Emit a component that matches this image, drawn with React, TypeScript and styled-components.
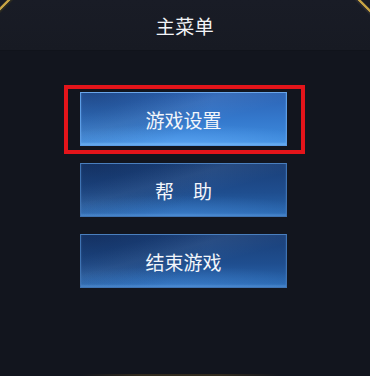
import React from "react";
import styled, { createGlobalStyle } from "styled-components";

const Global = createGlobalStyle`
  html, body { margin: 0; padding: 0; background: #12151e; }
  body { font-family: "Noto Sans CJK SC", "Noto Sans", sans-serif; }
`;

const Screen = styled.div`
  position: relative;
  width: 370px;
  height: 376px;
  overflow: hidden;
  background: #12151e;
  display: flex;
  flex-direction: column;
`;

const Header = styled.div`
  height: 50px;
  display: flex;
  align-items: center;
  justify-content: center;
  background: linear-gradient(180deg, #191c26 0%, #171a23 100%);
  border-bottom: 1px solid #10131b;
  color: #f2f4f8;
  font-size: 19px;
  letter-spacing: 0.5px;
`;

const Menu = styled.div`
  display: flex;
  flex-direction: column;
  gap: 17px;
  padding: 41px 0 0 80px;
`;

const Slot = styled.div`
  position: relative;
  width: 207px;
`;

const Highlight = styled.div`
  position: absolute;
  top: -7px;
  bottom: -8px;
  left: -16px;
  right: -18px;
  border: 4px solid #e4141a;
  pointer-events: none;
`;

const MenuButton = styled.button<{ $active?: boolean }>`
  width: 207px;
  height: 54px;
  box-sizing: border-box;
  border: 1px solid ${(p) => (p.$active ? "#5c9de6" : "#3f73b3")};
  border-top-color: ${(p) => (p.$active ? "#6aa6ea" : "#4a7fbe")};
  border-radius: 0;
  padding: 0;
  color: #f3f6fb;
  font-family: "Noto Sans CJK SC", "Noto Sans", sans-serif;
  font-size: 19px;
  cursor: pointer;
  background:
    radial-gradient(ellipse 70% 40% at 50% 100%, ${(p) => (p.$active ? "rgba(110,180,255,0.5)" : "rgba(80,150,230,0.4)")} 0%, rgba(0,0,0,0) 100%),
    radial-gradient(ellipse 60% 120% at 5% 0%, rgba(10,25,60,0.35) 0%, rgba(10,25,60,0) 100%),
    linear-gradient(165deg, rgba(255,255,255,0) 20%, rgba(255,255,255,0.06) 38%, rgba(255,255,255,0) 60%),
    linear-gradient(180deg, ${(p) => (p.$active ? "#2c63b4 0%, #3478cc 50%, #3f8ee0 100%" : "#1a3f78 0%, #1f4e8f 55%, #2a69b2 100%")});
  box-shadow: inset 0 -2px 2px ${(p) => (p.$active ? "rgba(140,200,255,0.45)" : "rgba(110,170,235,0.35)")};
`;

const Corner = styled.svg<{ $side: "left" | "right" }>`
  position: absolute;
  top: 0;
  ${(p) => (p.$side === "left" ? "left: 0;" : "right: 0;")}
  width: 16px;
  height: 16px;
`;

const BottomGlow = styled.div`
  position: absolute;
  left: 80px;
  right: 90px;
  bottom: 0;
  height: 2px;
  background: linear-gradient(90deg, rgba(120,90,30,0) 0%, rgba(120,90,30,0.3) 30%, rgba(120,90,30,0.3) 70%, rgba(120,90,30,0) 100%);
`;

export default function App() {
  return (
    <>
      <Global />
      <Screen>
        <Header>主菜单</Header>
        <Menu>
          <Slot>
            <MenuButton $active>游戏设置</MenuButton>
            <Highlight />
          </Slot>
          <Slot>
            <MenuButton>帮&emsp;助</MenuButton>
          </Slot>
          <Slot>
            <MenuButton>结束游戏</MenuButton>
          </Slot>
        </Menu>
        <Corner $side="left" viewBox="0 0 16 16">
          <line x1="-1" y1="10" x2="10" y2="-1" stroke="#c8a444" strokeWidth="2.5" />
          <line x1="-1" y1="13" x2="13" y2="-1" stroke="#2a2a20" strokeWidth="1.5" />
        </Corner>
        <Corner $side="right" viewBox="0 0 16 16">
          <line x1="4" y1="-1" x2="17" y2="12" stroke="#c8a444" strokeWidth="2.5" />
          <line x1="1" y1="-1" x2="17" y2="15" stroke="#2a2a30" strokeWidth="1.5" />
        </Corner>
        <BottomGlow />
      </Screen>
    </>
  );
}
